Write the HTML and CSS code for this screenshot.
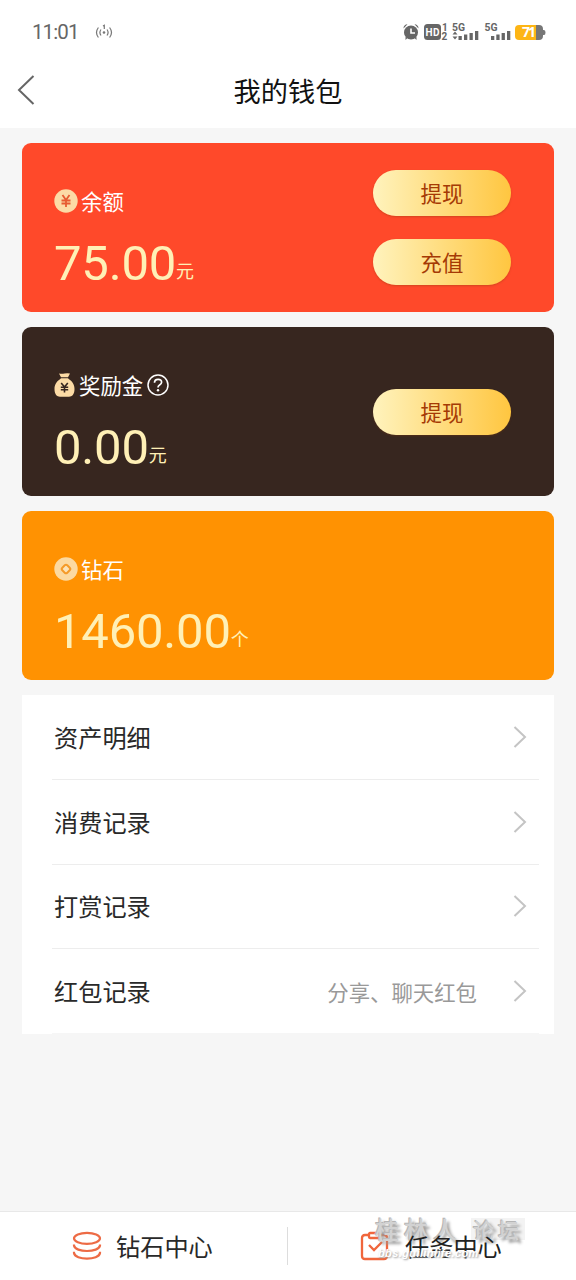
FILE: index.html
```html
<!DOCTYPE html>
<html lang="zh-CN">
<head>
<meta charset="utf-8">
<title>我的钱包</title>
<link rel="stylesheet" href="styles.css">
</head>
<body>
<div class="page">
  <div class="status">
    <span class="clock">11:01</span>
    <svg class="cast" width="18" height="18" viewBox="0 0 18 18" fill="none" stroke="#777" stroke-width="1.2">
      <path d="M3.4 4.5Q-.4 9.5 3.4 14.5M6 6.5Q3.800 9.500 6 12.500M14.600 4.500Q18.400 9.500 14.600 14.500M12 6.500Q14.200 9.500 12 12.500M8 3l1.300-.8V6"/><circle cx="9" cy="9.500" r="1.300" fill="#777" stroke="none"/>
    </svg>
    <svg class="indicators" width="144" height="24" viewBox="0 0 144 24">
      <g fill="#666">
        <circle cx="9" cy="12.500" r="7"/>
        <path d="M1.500 8.500a4 4 0 0 1 4-4.200zM16.500 8.500a4 4 0 0 0-4-4.200zM3.500 17l2 1-2 2zM14.500 17l-2 1 2 2z"/>
        <rect x="22" y="4" width="17" height="16" rx="3.500"/>
      </g>
      <path d="M9 8.500v4.500h4" fill="none" stroke="#fff" stroke-width="1.600"/>
      <g class="tiny">
        <text x="23.500" y="15.800" class="hd" textLength="14">HD</text>
        <text x="40" y="10.500">1</text><text x="39.500" y="20">2</text>
        <text x="50" y="10.500" textLength="13" lengthAdjust="spacingAndGlyphs">5G</text><text x="82.500" y="10.500" textLength="13" lengthAdjust="spacingAndGlyphs">5G</text>
      </g>
      <g fill="#666">
        <path d="M50.500 14.500l2.500-3 2.500 3zM50.500 16.500l2.500 3 2.500-3z"/>
        <rect x="56.500" y="16" width="3.300" height="4"/><rect x="62" y="14.500" width="3.300" height="5.500"/><rect x="67.500" y="13" width="3.300" height="7"/><rect x="73" y="11" width="3.300" height="9"/>
        <rect x="89" y="16" width="3.300" height="4"/><rect x="94.300" y="14.500" width="3.300" height="5.500"/><rect x="99.600" y="13" width="3.300" height="7"/><rect x="105" y="11" width="3.300" height="9"/>
      </g>
      <path d="M131 5h6q4 0 4 4v7q0 4-4 4h-6zM141 10h1q1.500 0 1.500 2.500T142 15h-1z" fill="#777"/>
      <path d="M117 5h17v15h-17q-4 0-4-4V9q0-4 4-4z" fill="#fdb515"/>
      <text x="120" y="17.300" class="level" textLength="14">71</text>
    </svg>
  </div>
  <header class="nav">
    <svg class="back" width="20" height="32" viewBox="0 0 20 32" fill="none" stroke="#666" stroke-width="2"><path d="M17.500 2L3 16l14.500 14"/></svg>
    <h1 class="title">我的钱包</h1>
  </header>

  <main class="content">
    <section class="card card-balance">
      <div class="info">
        <div class="label">
          <svg class="coin" width="24" height="24" viewBox="0 0 24 24"><circle cx="12" cy="12" r="11.700" fill="#fcdba6"/><path d="M8.500 6l3.500 5 3.500-5M7.500 11.500h9M7.500 14.500h9M12 11v7" fill="none" stroke="#e65b31" stroke-width="1.800"/></svg>
          <span>余额</span>
        </div>
        <div class="amount">75.00<span class="unit">元</span></div>
      </div>
      <div class="actions"><button class="pill">提现</button><button class="pill">充值</button></div>
    </section>

    <section class="card card-bonus">
      <div class="info">
        <div class="label">
          <svg class="bag" width="21" height="24" viewBox="0 0 21 24"><path d="M5 .5q2.700.6 5.500 0t5.500 0l-2 3.800H7zM7 5.300h7l1 1c4 2.500 5.500 6 5.500 9.700 0 5.500-2.500 7.700-5.500 7.700H6C3 23.700.5 21.500.5 16c0-3.700 1.500-7.200 5.500-9.700z" fill="#fcdba6"/><path d="M7.200 10l3.300 4 3.300-4M6.800 14.300h7.400M6.800 16.800h7.400M10.500 14v5.500" fill="none" stroke="#37261f" stroke-width="1.600"/></svg>
          <span>奖励金</span>
          <svg class="help" width="22" height="22" viewBox="0 0 22 22" fill="none" stroke="#fff" stroke-width="1.500"><circle cx="11" cy="11" r="10"/><path d="M7.500 8.800q0-3.500 3.600-3.500t3.500 3q0 1.500-2 2.700Q11 12 11 13.500" stroke-width="1.700"/><circle cx="11" cy="16.300" r="1.200" fill="#fff" stroke="none"/></svg>
        </div>
        <div class="amount">0.00<span class="unit">元</span></div>
      </div>
      <div class="actions"><button class="pill">提现</button></div>
    </section>

    <section class="card card-diamond">
      <div class="info">
        <div class="label">
          <svg class="coin" width="24" height="24" viewBox="0 0 24 24"><circle cx="12" cy="12" r="11.700" fill="#fcd9a0"/><rect x="8.500" y="8.500" width="7" height="7" rx="1.800" transform="rotate(45 12 12)" fill="#fce3b8" stroke="#f59a28" stroke-width="2"/></svg>
          <span>钻石</span>
        </div>
        <div class="amount">1460.00<span class="unit">个</span></div>
      </div>
    </section>

    <nav class="list">
      <a class="row"><span class="name">资产明细</span><svg class="chevron" width="14" height="22" viewBox="0 0 14 22"><path d="M1.500 1l10.500 10L1.500 21"/></svg></a>
      <a class="row"><span class="name">消费记录</span><svg class="chevron" width="14" height="22" viewBox="0 0 14 22"><path d="M1.500 1l10.500 10L1.500 21"/></svg></a>
      <a class="row"><span class="name">打赏记录</span><svg class="chevron" width="14" height="22" viewBox="0 0 14 22"><path d="M1.500 1l10.500 10L1.500 21"/></svg></a>
      <a class="row"><span class="name">红包记录</span><span class="hint">分享、聊天红包</span><svg class="chevron" width="14" height="22" viewBox="0 0 14 22"><path d="M1.500 1l10.500 10L1.500 21"/></svg></a>
    </nav>
  </main>

  <footer class="tabs">
    <a class="tab">
      <svg width="30" height="30" viewBox="0 0 30 30" fill="none" stroke="#ed6b45" stroke-width="2.200"><ellipse cx="15" cy="7.300" rx="13" ry="5.500"/><path d="M2 13.500v1c1 7.300 25 7.300 26 0v-1M2 20.800v1.200c1 7.500 25 7.500 26 0v-1.200"/></svg>
      <span>钻石中心</span>
    </a>
    <a class="tab tab-task">
      <svg width="30" height="30" viewBox="0 0 30 30" fill="none" stroke="#f0663c" stroke-width="2.300"><path d="M8 4H5Q2 4 2 7v18q0 3 3 3h19q3 0 3-3V7q0-3-3-3h-3"/><rect x="9" y="2" width="11" height="5" rx="1"/><path d="M9 14l5 5 8-8"/></svg>
      <span>任务中心</span>
    </a>
    <div class="watermark">
      <span class="mark-name">桂林人</span><span class="mark-forum">论坛</span>
      <span class="mark-url">bbs.guilinlife.com</span>
    </div>
  </footer>
</div>
</body>
</html>
```
FILE: styles.css
```css
* { box-sizing: border-box; }
body {
  margin: 0;
  background: #f6f6f6;
  font-family: "Noto Sans CJK SC", sans-serif;
  color: #292929;
}
.page { display: flex; flex-direction: column; width: 576px; height: 1280px; }
.status { display: flex; align-items: center; height: 64px; padding: 0 30px 0 32px; background: #fff; }
.clock { font: 20.500px/24px Roboto, sans-serif; color: #666; width: 46px; letter-spacing: -.9px; }
.cast { margin-left: 17px; }
.indicators { margin-left: auto; }
.tiny text { font: bold 10px Roboto, sans-serif; fill: #666; }
.tiny .hd { font-size: 10px; fill: #fff; }
.level { font: bold 14px "Open Sans", sans-serif; fill: #fff; }
.nav { display: flex; align-items: center; height: 64px; padding: 0 16px; background: #fff; }
.back { margin-top: -12px; }
.title { flex: 1; margin: -12px 20px 0 0; text-align: center; font-size: 27.200px; line-height: 40px; font-weight: 400; color: #111; }
.content { flex: 1; padding: 15px 22px 0; }
.card { display: flex; height: 169px; margin-bottom: 15px; padding-left: 32px; border-radius: 9px; color: #fff; }
.card-balance { background: #ff492a; }
.card-bonus { background: #37261f; }
.card-diamond { background: #ff9202; }
.info { flex: 1; padding-top: 42px; }
.label { display: flex; align-items: center; height: 32px; font-size: 21.400px; line-height: 32px; }
.label span { margin-top: -1px; }
.coin { margin-right: 3px; }
.bag { margin-right: 4px; }
.help { margin-left: 4px; }
.amount { margin-top: 17px; font: 49px/60px Roboto, sans-serif; color: #fff0b6; letter-spacing: -.2px; }
.unit { font: 18px/20px "Noto Sans CJK SC", sans-serif; position: relative; top: -2px; }
.actions { display: flex; flex-direction: column; justify-content: center; gap: 23px; margin-right: 43px; }
.pill {
  width: 138px; height: 46px; padding: 0; border: 0; border-radius: 23px;
  background: linear-gradient(90deg, #fff3bd, #ffc640);
  box-shadow: 0 1px 2px rgba(130, 60, 10, .35);
  font: 21.400px/44px "Noto Sans CJK SC", sans-serif; color: #a53a05;
}
.list { height: 339px; padding: 0 15px 0 30px; background: #fff; }
.row { display: flex; align-items: center; height: 84.800px; padding: 0 12px 0 2px; border-bottom: 1px solid #ededed; }
.row:last-child { border-color: #f6f6f6; }
.name { flex: 1; font-size: 24.200px; line-height: 36px; }
.hint { margin-right: 36px; font-size: 21.400px; color: #999; }
.chevron { fill: none; stroke: #c4c4c4; stroke-width: 2; }
.tabs { position: relative; display: flex; height: 69px; background: #fff; border-top: 1px solid #e8e8e8; }
.tab { display: flex; align-items: center; gap: 14px; width: 288px; padding-left: 72px; font-size: 24.200px; line-height: 36px; }
.tab span { margin-top: -1px; }
.tab:first-child { background: linear-gradient(#ddd, #ddd) right center / 1px 38px no-repeat; }
.tab-task { color: #222; }
.tab-task span { position: relative; left: 1px; z-index: 1; }
.watermark {
  position: absolute; left: 374px; top: 0; width: 160px; height: 58px;
  font-family: "Noto Sans CJK SC", sans-serif; font-weight: 500; color: #d2d2d2;
  text-shadow: -1px -1px 0 #b5b5b5, 3px 3px 3px #999;
}
.mark-name { position: absolute; left: 1px; top: 0; font-size: 24px; line-height: 34px; letter-spacing: 5px; white-space: nowrap; }
.mark-forum { position: absolute; left: 97px; top: 6px; padding: 0 2px; background: rgba(238, 238, 238, .7); font-size: 21px; line-height: 22px; letter-spacing: 4px; white-space: nowrap; }
.mark-url { position: absolute; z-index: 2; left: 4px; top: 33px; font: italic bold 11px/16px "Liberation Sans", sans-serif; letter-spacing: .4px; color: #fff; text-shadow: 1px 1px 2px #999; }
```
